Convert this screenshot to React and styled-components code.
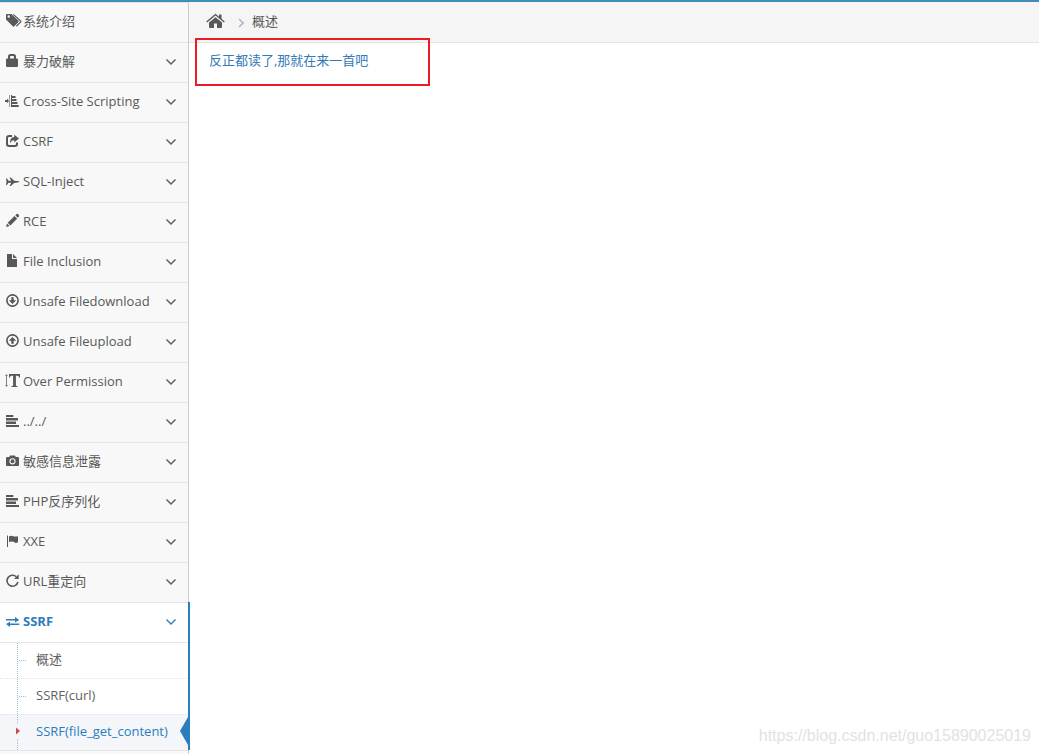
import styled, { createGlobalStyle, css } from "styled-components";

const GlobalStyle = createGlobalStyle`
  * {
    box-sizing: border-box;
  }
  body {
    margin: 0;
    background: #fff;
    color: #585858;
    font-family: "Open Sans", "Noto Sans CJK SC", sans-serif;
    font-size: 13px;
    line-height: 18px;
  }
`;

const Page = styled.div`
  position: relative;
  display: flex;
  min-height: 100vh;
  border-top: 2px solid #438eb9;
`;
const Sidebar = styled.nav`
  flex: 0 0 189px;
  background: #f8f8f8;
  border-right: 1px solid #ccc;
`;
const Menu = styled.ul`
  margin: 0;
  padding: 0;
  list-style: none;
  border-bottom: 1px solid #e5e5e5;
`;
const MenuItem = styled.li`
  position: relative;
  border-top: 1px solid #e5e5e5;
  ${(p) =>
    p.$open &&
    css`
      background: #fff;
      &::after {
        content: "";
        position: absolute;
        top: -1px;
        right: -2px;
        bottom: 0;
        width: 2px;
        background: #2b7dbc;
      }
    `}
`;
const MenuLink = styled.a`
  display: flex;
  align-items: center;
  height: 39px;
  padding: 0 11px 3px 5px;
  color: ${(p) => (p.$open ? "#2b7dbc" : "#585858")};
  font-weight: ${(p) => (p.$open ? 700 : 400)};
  text-decoration: none;
`;
const MenuIcon = styled.svg`
  flex: none;
  width: 18px;
  height: 18px;
  fill: currentColor;
  overflow: visible;
`;
const MenuText = styled.span`
  flex: 1;
  white-space: nowrap;
`;
const Arrow = styled.svg`
  width: 12px;
  height: 12px;
  margin-top: 1px;
  fill: none;
  stroke: currentColor;
  stroke-width: 1.4;
`;
const Submenu = styled.ul`
  position: relative;
  margin: 0;
  padding: 0;
  list-style: none;
  border-top: 1px solid #e5e5e5;
  &::before {
    content: "";
    position: absolute;
    z-index: 1;
    top: 0;
    bottom: 0;
    left: 17px;
    border-left: 1px dotted #9dbdd6;
  }
`;
const SubItem = styled.li`
  position: relative;
  border-top: 1px dotted #e4e4e4;
  background: ${(p) => (p.$active ? "#f4f6fa" : "#fff")};
  &:first-child {
    border-top: 0;
  }
  &::before {
    content: "";
    position: absolute;
    top: 17px;
    left: 19px;
    width: 7px;
    border-top: ${(p) => (p.$active ? "0" : "1px dotted #9dbdd6")};
  }
  &::after {
    content: "";
    display: ${(p) => (p.$active ? "block" : "none")};
    position: absolute;
    top: 2px;
    right: 0;
    border: solid transparent;
    border-width: 14px 8px 14px 0;
    border-right-color: #2b7dbc;
  }
`;
const SubLink = styled.a`
  display: block;
  height: 35px;
  padding: 7px 0 0 36px;
  color: ${(p) => (p.$active ? "#2b7dbc" : "#616161")};
  text-decoration: none;
  white-space: nowrap;
`;
const Caret = styled.svg`
  position: absolute;
  z-index: 2;
  top: 9px;
  left: 15px;
  width: 6px;
  height: 14px;
  background: #f4f6fa;
  fill: #cc4a45;
`;
const Main = styled.main`
  position: relative;
  flex: 1;
  min-width: 0;
`;
const Breadcrumbs = styled.div`
  display: flex;
  align-items: center;
  height: 41px;
  padding: 0 17px 2px;
  background: #f5f5f5;
  border-bottom: 1px solid #e5e5e5;
`;
const HomeLink = styled.a`
  display: flex;
  color: #585858;
`;
const HomeIcon = styled.svg`
  width: 19px;
  height: 16px;
  fill: currentColor;
`;
const Separator = styled.svg`
  width: 6px;
  height: 10px;
  margin: 3px 8px 0 13px;
  fill: none;
  stroke: #b2b6bf;
  stroke-width: 1.6;
`;
const Content = styled.div`
  padding: 8px 20px;
`;
const PoemLink = styled.a`
  color: #337ab7;
  text-decoration: none;
`;
const Highlight = styled.div`
  position: absolute;
  top: 36px;
  left: 6px;
  width: 235px;
  height: 48px;
  border: 2px solid #ed1c24;
  pointer-events: none;
`;
const Watermark = styled.div`
  position: absolute;
  right: 8px;
  bottom: 9px;
  color: #e2e2e2;
  font-family: "Liberation Sans", sans-serif;
  font-size: 16px;
`;

const icons = {
  tags: (
    <>
      <path
        fillRule="evenodd"
        d="M1 3q0-1 1-1h4.5l7 6.8q.5.6 0 1.1L9 14.6q-.5.4-1 0L1 7.5zM3.7 3.3a1.2 1.2 0 1 0 0 2.4 1.2 1.2 0 0 0 0-2.4z"
      />
      <path
        d="M8.3 2.4 15.6 9q.6.5 0 1.1l-4.3 4.2"
        fill="none"
        stroke="currentColor"
        strokeWidth="1.2"
      />
    </>
  ),
  lock: (
    <path
      fillRule="evenodd"
      d="M3 7V4.5Q3 2 5.5 2h3Q11 2 11 4.5V6.500h1q1 0 1 1V14q0 1-1 1H2q-1 0-1-1V7.500q0-1 1-1h1zM5 6.500h4V5q0-1-1-1H6Q5 4 5 5z"
    />
  ),
  tree: (
    <>
      <path d="M0 8h2V6.600L4 9 2 11.200V10H0z" />
      <path d="M4 3h1v12H4z" opacity=".6" />
      <path d="M6 3h1v12H6zM7 4h3.500v2H7zM7 7h4.500v2H7zM7 10h5.500v2H7zM7 13h6.700v2H7z" />
    </>
  ),
  share: (
    <>
      <path
        d="M7 4H4Q2 4 2 6v6q0 2 2 2h6q2 0 2-2v-1.5"
        fill="none"
        stroke="currentColor"
        strokeWidth="2"
      />
      <path d="M9.2 2.7 14 6.6l-4.8 4V8.4Q6.5 8 5.2 11.5 4.5 5 9.2 4.9z" />
    </>
  ),
  plane: (
    <path d="M1 6.500h1L3.500 8.800h2.700L4.600 5.500h1.200l3.400 3.200 3.300.4 2.500.7-2.500.7-3.300.4L5.800 14H4.600l1.600-3.200H3.500L2 13H1l.5-3.200z" />
  ),
  pencil: (
    <path d="M10.300 3.300 11.600 2q.8-.5 1.400.1l.9 1.100q.5.6 0 1.300L12.700 5.800zM9.500 4l2.600 2.700-6.700 6.700-2.700-2.700zM2 11.400l2.700 2.700-3.700.8z" />
  ),
  file: <path d="M2 2h5v5h5v8H2zM8 2l4 4H8z" />,
  download: (
    <>
      <circle cx="7.5" cy="8.5" r="5.6" fill="none" stroke="currentColor" strokeWidth="1.6" />
      <path d="M6.300 5.200h2.400v3.100h2.500l-3.700 3.700-3.700-3.700h2.500z" />
    </>
  ),
  upload: (
    <>
      <circle cx="7.5" cy="8.5" r="5.6" fill="none" stroke="currentColor" strokeWidth="1.6" />
      <path d="M6.300 11.800h2.400V8.700h2.500L7.500 5 3.800 8.700h2.500z" />
    </>
  ),
  textHeight: (
    <>
      <path d="M1.500 2 3 4H2v9h1l-1.500 2L0 13h1V4H0z" opacity=".75" />
      <path d="M4 2h11v3.500h-.8Q14 3.800 12.500 3.700h-1.600v9.500q0 .9 1.700 1v.8H6.400v-.8q1.700-.1 1.700-1V3.700H6.500Q5 3.800 4.800 5.500H4z" />
    </>
  ),
  bars: <path d="M1 3h7.300v2H1zM1 6h12v2.500H1zM1 9.500h10v2.500H1zM1 13h13v2H1z" />,
  camera: (
    <path
      fillRule="evenodd"
      d="M2 5h2.2l.9-1.5h4.8l.9 1.5H13q1 0 1 1v7q0 1-1 1H2q-1 0-1-1V6q0-1 1-1zM7.5 6.2a3.1 3.1 0 1 0 0 6.2 3.1 3.1 0 0 0 0-6.2zM7.500 7.300a2 2 0 1 1 0 4 2 2 0 0 1 0-4z"
    />
  ),
  flag: <path d="M2 3.500h1V15H2zM4 4.500q2-1.200 4.200-.3 1.800.7 4.800 0v5.800q-1 .9-2.300.9L8.500 9.800Q6 9 4 10z" />,
  reload: (
    <>
      <path
        d="M11.2 4.600A5.500 5.500 0 1 0 12.900 10"
        fill="none"
        stroke="currentColor"
        strokeWidth="1.6"
      />
      <path d="M13.700 2.300V7H9z" />
    </>
  ),
  exchange: (
    <path d="M1 7h9V5l4.200 3L10 10.400V8.600H1zM14.200 13H5v1.900L1 12l4-2.200v1.600h9.200z" />
  ),
};

const items = [
  { icon: "tags", text: "系统介绍", leaf: true },
  { icon: "lock", text: "暴力破解" },
  { icon: "tree", text: "Cross-Site Scripting" },
  { icon: "share", text: "CSRF" },
  { icon: "plane", text: "SQL-Inject" },
  { icon: "pencil", text: "RCE" },
  { icon: "file", text: "File Inclusion" },
  { icon: "download", text: "Unsafe Filedownload" },
  { icon: "upload", text: "Unsafe Fileupload" },
  { icon: "textHeight", text: "Over Permission" },
  { icon: "bars", text: "../../" },
  { icon: "camera", text: "敏感信息泄露" },
  { icon: "bars", text: "PHP反序列化" },
  { icon: "flag", text: "XXE" },
  { icon: "reload", text: "URL重定向" },
  {
    icon: "exchange",
    text: "SSRF",
    children: ["概述", "SSRF(curl)", "SSRF(file_get_content)"],
    active: 2,
  },
];

const App = () => {
  return (
    <>
      <GlobalStyle />
      <Page>
        <Sidebar>
          <Menu>
            {items.map((item, i) => (
              <MenuItem key={i} $open={!!item.children}>
                <MenuLink href="#" $open={!!item.children}>
                  <MenuIcon viewBox="0 0 18 18" aria-hidden="true">
                    {icons[item.icon]}
                  </MenuIcon>
                  <MenuText>{item.text}</MenuText>
                  {!item.leaf && (
                    <Arrow viewBox="0 0 12 12" aria-hidden="true">
                      <path d="M1.5 3.5 6 8l4.5-4.5" />
                    </Arrow>
                  )}
                </MenuLink>
                {item.children && (
                  <Submenu>
                    {item.children.map((text, n) => (
                      <SubItem key={text} $active={n === item.active}>
                        <SubLink href="#" $active={n === item.active}>
                          {text}
                        </SubLink>
                        {n === item.active && (
                          <Caret viewBox="0 0 6 14" aria-hidden="true">
                            <path d="M1 3.5 5 7l-4 3.5z" />
                          </Caret>
                        )}
                      </SubItem>
                    ))}
                  </Submenu>
                )}
              </MenuItem>
            ))}
          </Menu>
        </Sidebar>
        <Main>
          <Breadcrumbs>
            <HomeLink href="#" aria-label="Home">
              <HomeIcon viewBox="0 0 19 16">
                <path d="M9.5 4.2 16 9.6V14q0 1-1 1h-4v-4.5H8V15H4q-1 0-1-1V9.6z" />
                <path d="M9.5.8 13 3.7V1.5h2.5v4.3L18.8 8.5l-.9 1L9.5 2.6 1.1 9.5l-.9-1z" />
              </HomeIcon>
            </HomeLink>
            <Separator viewBox="0 0 6 10" aria-hidden="true">
              <path d="M1 1l4 4-4 4" />
            </Separator>
            <span>概述</span>
          </Breadcrumbs>
          <Content>
            <PoemLink href="#">反正都读了,那就在来一首吧</PoemLink>
          </Content>
          <Highlight />
        </Main>
        <Watermark>https://blog.csdn.net/guo15890025019</Watermark>
      </Page>
    </>
  );
};

export default App;
